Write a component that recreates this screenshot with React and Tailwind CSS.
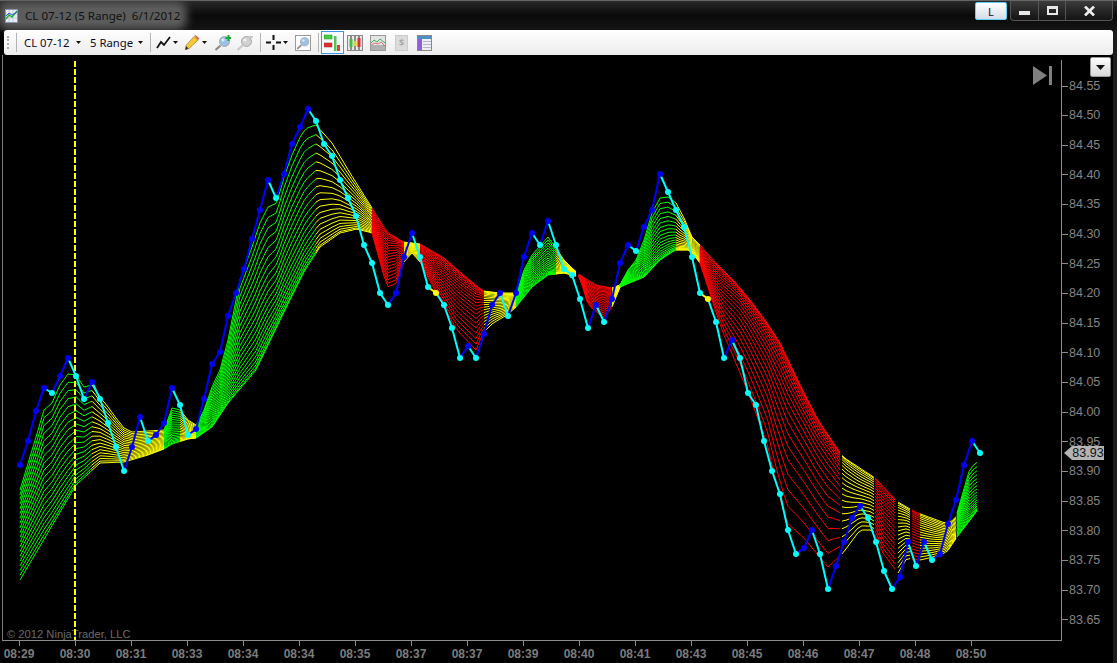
import React from 'react';

const barYs = [465,441,411,388,393,376,358,376,399,382,399,423,447,471,447,417,441,435,423,388,405,435,429,399,364,352,316,293,269,239,210,180,198,174,144,127,109,121,144,156,180,198,216,245,263,293,305,293,257,233,257,287,293,305,328,358,346,358,334,305,293,316,293,257,233,245,221,245,269,275,299,328,305,322,299,263,245,251,227,210,174,192,210,227,257,293,299,322,358,340,358,393,405,441,471,494,530,554,548,530,554,589,566,542,518,506,518,542,571,589,577,542,566,542,560,554,524,500,465,441,453];

const kindOf = (i) => {
  if (i === 52 || i === 86) return 'y';
  if (i === 0) return 'b';
  return barYs[i] < barYs[i - 1] ? 'b' : 'c';
};
const kindColor = { b: '#0000ff', c: '#00ffff', y: '#ffff00' };

const ribbonTop = [[20,490],[36,437],[44,410],[52,403],[60,385],[68,374],[76,375],[84,387],[92,385],[100,397],[108,407],[116,418],[124,428],[132,432],[148,431],[164,430],[172,408],[180,410],[188,420],[196,425],[204,410],[212,387],[220,370],[228,340],[240,280],[252,247],[260,223],[268,207],[277,203],[283,180],[292,155],[302,133],[307,128],[316,125],[332,143],[350,173],[372,208],[387,232],[403,242],[420,244],[444,258],[467,278],[483,291],[500,293],[517,293],[524,270],[532,255],[548,237],[556,248],[564,260],[572,268],[580,275],[596,285],[612,288],[620,285],[628,270],[636,260],[644,240],[652,213],[660,198],[668,197],[676,203],[684,218],[692,237],[700,245],[716,263],[733,280],[750,300],[767,323],[780,343],[800,385],[818,420],[843,457],[875,478],[898,502],[915,512],[945,523],[955,520],[970,468],[980,460]];
const ribbonBottom = [[20,580],[76,485],[100,463],[124,462],[148,455],[164,449],[172,444],[188,439],[196,438],[212,427],[228,403],[256,370],[285,310],[305,270],[320,247],[340,233],[357,229],[372,233],[387,287],[397,283],[403,263],[412,253],[420,262],[440,300],[457,330],[476,350],[483,333],[493,323],[507,315],[516,307],[532,287],[548,275],[564,273],[580,277],[588,305],[604,318],[612,307],[620,287],[644,277],[660,260],[675,250],[690,250],[700,263],[713,303],[722,330],[748,392],[767,443],[777,487],[787,523],[803,537],[828,567],[843,553],[860,530],[873,530],[883,553],[898,573],[907,558],[920,560],[933,557],[947,552],[957,537],[980,507]];
// which edge the slow averages bunch up on: + bottom, - top
const ribbonBias = [[20,0],[70,0.3],[130,0.1],[200,0.4],[300,0.5],[372,0.2],[400,-0.6],[420,-0.2],[480,-0.8],[516,0],[556,0.6],[580,0.2],[612,-0.5],[640,0.6],[680,0.8],[700,0.2],[740,-1.2],[830,-1],[860,-0.3],[900,-0.4],[950,0],[980,0.8]];

const G = '#00ff00', Yl = '#ffff00', R = '#ff0000';
const ribbonColors = [[20,92,G],[92,164,Yl],[164,180,G],[180,196,Yl],[196,316,G],[316,372,Yl],[372,404,R],[404,420,Yl],[420,484,R],[484,516,Yl],[516,556,G],[556,579,Yl],[579,612,R],[612,620,Yl],[620,676,G],[676,700,Yl],[700,842,R],[842,875,Yl],[875,898,R],[898,912,Yl],[912,920,R],[920,957,Yl],[957,980,G]];

const lerp = (curve, x) => {
  for (let i = 1; i < curve.length; i++) {
    if (x <= curve[i][0]) {
      const [x0, y0] = curve[i - 1];
      const [x1, y1] = curve[i];
      return y0 + ((y1 - y0) * (x - x0)) / (x1 - x0);
    }
  }
  return curve[curve.length - 1][1];
};

const LINE_COUNT = 20;
const ribbonPath = (from, to) => {
  let d = '';
  for (let n = 0; n < LINE_COUNT; n++) {
    const t = n / (LINE_COUNT - 1);
    for (let x = from; x <= to; x += 4) {
      const bias = lerp(ribbonBias, x);
      const bent = bias >= 0 ? 1 - Math.pow(1 - t, 1 + bias) : Math.pow(t, 1 - bias);
      const y = lerp(ribbonTop, x) * (1 - bent) + lerp(ribbonBottom, x) * bent;
      d += `${x === from ? 'M' : 'L'}${x} ${y.toFixed(1)}`;
    }
  }
  return d;
};

const prices = ['84.55','84.50','84.45','84.40','84.35','84.30','84.25','84.20','84.15','84.10','84.05','84.00','83.95','83.90','83.85','83.80','83.75','83.70','83.65'];
const times = ['08:29','08:30','08:31','08:33','08:34','08:34','08:35','08:37','08:37','08:39','08:40','08:41','08:43','08:45','08:46','08:47','08:48','08:50'];

const Caret = ({ className }) => (
  <svg width="5" height="3" viewBox="0 0 5 3" className={`shrink-0 ${className}`}><path d="M0 0h5L2.5 3z" fill="#111" /></svg>
);

const Sep = ({ className }) => <div className={`w-px h-[19px] bg-[#b4b4b4] shrink-0 ${className}`} />;

const Lens = ({ handle = '#888', glass = '#9cc0e8' }) => (
  <>
    <circle cx="10.5" cy="6.5" r="5" fill={glass} stroke="#aaa" />
    <circle cx="9" cy="5" r="1.6" fill="#fff" opacity="0.7" />
    <path d="M6.5 10.5L1.5 15" stroke={handle} strokeWidth="2" />
  </>
);

const PriceChart = () => (
  <svg width="1062" height="585" viewBox="0 55 1062 585" className="block">
    {ribbonColors.map(([a, b, c]) => (
      <path key={a} d={ribbonPath(a, b)} fill="none" stroke={c} strokeWidth="1" />
    ))}
    <path d="M75 61V640" stroke="#ffff00" strokeWidth="2" strokeDasharray="6 2" />
    {barYs.slice(1).map((y, i) => (
      <line key={i} x1={20 + 8 * i} y1={barYs[i]} x2={28 + 8 * i} y2={y} stroke={kindColor[kindOf(i + 1)]} strokeWidth="2" />
    ))}
    {barYs.map((y, i) => (
      <circle key={i} cx={20 + 8 * i} cy={y} r="3" fill={kindColor[kindOf(i)]} />
    ))}
  </svg>
);

export default function App() {
  return (
    <div className="w-[1117px] h-[663px] bg-black overflow-hidden flex flex-col font-['Liberation_Sans',sans-serif]">
      {/* title bar */}
      <div className="h-[30px] shrink-0 flex items-start bg-gradient-to-b from-[#2a2a2a] via-[#0a0a0a] to-[#141414] border-t border-[#666]">
        <div className="mt-[7px] ml-[5px] flex items-center gap-[7px] h-[15px] bg-[#5c5c5c] shadow-[0_0_9px_7px_#5c5c5c] rounded-sm">
          <svg width="13" height="14" viewBox="0 0 13 14" className="shrink-0">
            <rect x="0.5" y="0.5" width="12" height="13" fill="#e8ecf8" stroke="#8a94b0" />
            <path d="M1 5h11M1 9h11M4 1v12M8 1v12" stroke="#b4bcd8" strokeWidth="0.6" />
            <path d="M1 10L4 6l3 2 5-6" stroke="#20b030" strokeWidth="1.4" fill="none" />
            <path d="M1 7l3-3 3 2 5-3" stroke="#3060d0" strokeWidth="1" fill="none" />
          </svg>
          <span className="font-['Noto_Sans',sans-serif] text-[11.6px] leading-none text-[#111] whitespace-pre">CL 07-12 (5 Range)  6/1/2012</span>
        </div>
        <div className="ml-auto flex items-start">
          <div className="mt-px w-[32px] h-[18px] rounded-[2px] border border-[#5fd0f0] bg-gradient-to-b from-white to-[#d4dce8] flex items-center justify-center font-['Noto_Sans',sans-serif] text-[11px] leading-none text-[#111]">L</div>
          <div className="ml-[3px] mr-[4px] w-[103px] h-[20px] flex rounded-b-[4px] border border-t-0 border-[#555] bg-gradient-to-b from-[#3c3c3c] to-[#141414]">
            <div className="w-[28px] border-r border-[#555] flex items-center justify-center">
              <div className="w-[11px] h-[4px] mt-[5px] bg-[#e8e8e8]" />
            </div>
            <div className="w-[27px] border-r border-[#555] flex items-center justify-center">
              <div className="w-[11px] h-[9px] border-2 border-t-[3px] border-[#e8e8e8]" />
            </div>
            <div className="flex-1 flex items-center justify-center">
              <svg width="11" height="10" viewBox="0 0 11 10"><path d="M1 0.5l9 9M10 0.5l-9 9" stroke="#eee" strokeWidth="2.6" /></svg>
            </div>
          </div>
        </div>
      </div>

      {/* toolbar */}
      <div className="h-[25px] shrink-0 mx-[4px] rounded-[3px] bg-gradient-to-b from-white to-[#ececec] flex items-center font-['Noto_Sans',sans-serif] text-[11.3px] leading-none text-[#0a0a28]">
        <div className="ml-[3px] w-[2px] h-[13px] shrink-0 border-l-2 border-dotted border-[#aaa]" />
        <Sep className="ml-[7px]" />
        <span className="ml-[7px] w-[46px] shrink-0 whitespace-nowrap">CL 07-12</span>
        <Caret className="ml-[6px]" />
        <span className="ml-[9px] w-[42px] shrink-0 whitespace-nowrap">5 Range</span>
        <Caret className="ml-[6px]" />
        <Sep className="ml-[7px]" />
        <svg width="16" height="14" viewBox="0 0 16 14" className="ml-[5px] shrink-0"><path d="M1 12l4-6 3 3 6-8" stroke="#111" strokeWidth="1.8" fill="none" /></svg>
        <Caret className="ml-px" />
        <svg width="16" height="16" viewBox="0 0 16 16" className="ml-[6px] shrink-0">
          <path d="M2 10.5l8-9 4 3.5-9 8.5-3 1z" fill="#f5c838" stroke="#a87818" strokeWidth="0.7" />
          <path d="M10.5 1l1-1 4 3.5-1.5 1.5z" fill="#e06060" />
          <path d="M1 15l1-4 2.500 2.500z" fill="#333" />
        </svg>
        <Caret className="ml-[2px]" />
        <svg width="17" height="16" viewBox="0 0 17 16" className="ml-[7px] shrink-0">
          <Lens />
          <path d="M14.5 0v6M11.5 3h6" stroke="#10b030" strokeWidth="2" />
        </svg>
        <svg width="17" height="16" viewBox="0 0 17 16" className="ml-[5px] shrink-0">
          <Lens handle="#c8c8c8" glass="#d0d0d0" />
          <path d="M12 2h5" stroke="#c8c8c8" strokeWidth="2" />
        </svg>
        <Sep className="ml-[7px]" />
        <svg width="15" height="15" viewBox="0 0 15 15" className="ml-[5px] shrink-0"><path d="M7.5 0v5M7.5 10v5M0 7.5h5M10 7.500h5" stroke="#111" strokeWidth="2" /></svg>
        <Caret className="ml-[2px]" />
        <div className="ml-[7px] w-[16px] h-[16px] shrink-0 border border-[#999] bg-white flex items-center justify-center">
          <svg width="14" height="14" viewBox="0 0 17 16"><Lens /></svg>
        </div>
        <Sep className="ml-[7px]" />
        <div className="ml-[2px] w-[23px] h-[23px] shrink-0 border border-[#3c96e6] bg-[#f8fbff] flex items-center justify-center">
          <svg width="17" height="17" viewBox="0 0 17 17">
            <rect x="0" y="1" width="8" height="4" fill="#40d040" stroke="#209020" strokeWidth="0.5" />
            <rect x="0" y="9" width="8" height="4" fill="#e03030" stroke="#a02020" strokeWidth="0.5" />
            <rect x="10" y="2" width="2.5" height="15" fill="#50c850" />
            <rect x="13" y="11" width="3" height="6" fill="#e04040" />
          </svg>
        </div>
        <div className="ml-[3px] w-[16px] h-[16px] shrink-0 border border-[#888] bg-[#e8e8e8] flex items-center justify-center">
          <svg width="14" height="14" viewBox="0 0 14 14">
            <path d="M3 0v14M7 0v14M11 0v14" stroke="#333" />
            <rect x="1.5" y="3" width="3" height="8" fill="#40c040" />
            <rect x="5.5" y="5" width="3" height="5" fill="#d8d040" />
            <rect x="9.5" y="2" width="3" height="9" fill="#e03030" />
          </svg>
        </div>
        <div className="ml-[7px] w-[16px] h-[16px] shrink-0 border border-[#999] bg-[#e4e4e4] flex items-center justify-center">
          <svg width="14" height="14" viewBox="0 0 14 14">
            <path d="M0 14V9h14v5z" fill="#b0b0b0" />
            <path d="M0 7l3-3 3 2 3-3 5 4" stroke="#40b060" fill="none" />
            <path d="M0 9l4-2 3 1 3-2 4 4" stroke="#e07070" fill="none" />
          </svg>
        </div>
        <div className="ml-[9px] w-[13px] h-[16px] shrink-0 border border-[#ccc] bg-[#dcdcdc] flex items-center justify-center text-[9px] font-bold text-[#a8a8a8]">$</div>
        <div className="ml-[9px] w-[15px] h-[16px] shrink-0 border border-[#888] bg-[#eef0f8] flex flex-col">
          <div className="h-[3px] bg-[#4c90c8]" />
          <div className="flex-1 flex">
            <div className="w-[4px] bg-[#9060d8]" />
            <div className="flex-1 flex flex-col justify-evenly pl-px">
              <div className="h-px bg-[#b0b8d0]" />
              <div className="h-px bg-[#b0b8d0]" />
              <div className="h-px bg-[#b0b8d0]" />
            </div>
          </div>
        </div>
      </div>

      {/* chart */}
      <div className="relative flex-1 flex flex-col">
        <div className="h-[586px] flex">
          <div className="relative w-[1060px] ml-[2px] border-l border-[#777] border-b border-b-[#8c8c8c] -mr-px">
            <span className="absolute left-[4px] bottom-[-1px] text-[11.2px] leading-[14px] text-[#6a6a6a]">© 2012 NinjaTrader, LLC</span>
            <div className="absolute left-[-3px] bottom-0">
              <PriceChart />
            </div>
            <svg width="20" height="20" viewBox="0 0 20 20" className="absolute left-[1030px] top-[11px]">
              <path d="M0 0l14 9.5L0 19z" fill="#808080" />
              <rect x="16" y="0" width="3" height="19" fill="#808080" />
            </svg>
          </div>
          <div className="relative flex-1 mt-[5px] border-l border-[#8c8c8c] pt-[11.2px] flex flex-col">
            {prices.map((p) => (
              <div key={p} className="h-[29.67px] shrink-0 flex items-center gap-[1px] text-[12.5px] leading-none text-[#848484]">
                <div className="w-[6px] h-px bg-[#8c8c8c]" />
                <span>{p}</span>
              </div>
            ))}
          </div>
        </div>
        <div className="flex ml-[-9px] text-[12px] font-bold leading-none text-[#7c7c7c]">
          {times.map((t, i) => (
            <div key={i} className="w-[56px] shrink-0 flex flex-col items-center">
              <div className="w-px h-[5px] bg-[#8c8c8c]" />
              <span className="mt-[2px]">{t}</span>
            </div>
          ))}
        </div>

        {/* scale dropdown and last price marker sit over the axis */}
        <div className="absolute left-[1090px] top-[2px] w-[21px] h-[20px] rounded-[2px] border border-[#999] bg-gradient-to-b from-white to-[#d8d8d8] flex items-center justify-center">
          <svg width="9" height="5" viewBox="0 0 9 5"><path d="M0 0h9L4.5 5z" fill="#111" /></svg>
        </div>
        <div className="absolute left-[1064px] top-[391px] flex items-center">
          <svg width="8" height="14" viewBox="0 0 8 14" className="block"><path d="M8 0v14L0 7z" fill="#b4b4b4" /></svg>
          <div className="w-[32px] h-[14px] bg-[#b4b4b4] text-[12.5px] leading-[14px] text-[#111] text-center">83.93</div>
        </div>
        <div className="absolute left-[1113px] top-[-25px] bottom-0 w-[4px] bg-[#1c1c1c]" />
      </div>
    </div>
  );
}
